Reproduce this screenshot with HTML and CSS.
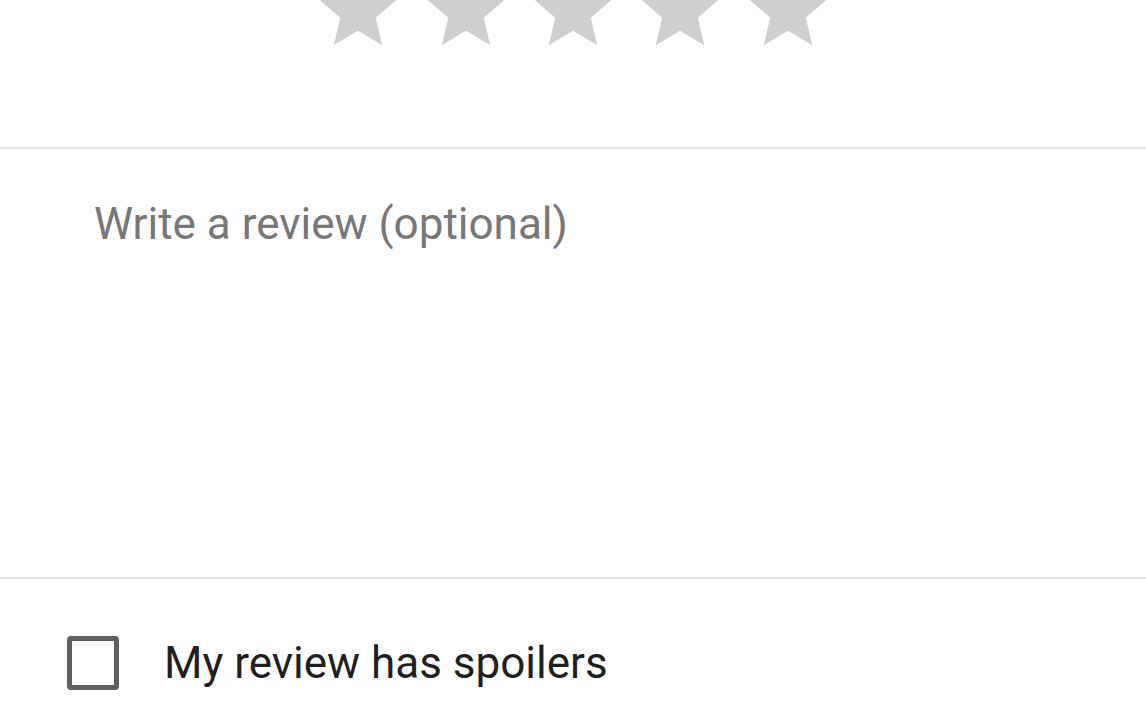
FILE: index.html
```html
<!DOCTYPE html>
<html lang="en">
<head>
<meta charset="utf-8">
<title>Write a review</title>
<link rel="stylesheet" href="styles.css">
</head>
<body>
<div class="page">
  <section class="rating">
    <div class="stars">
      <svg class="star" viewBox="0 0 24 24" aria-hidden="true"><path d="M12 17.27L18.18 21l-1.64-7.03L22 9.24l-7.19-.61L12 2 9.19 8.630 2 9.24l5.46 4.73L5.82 21z"/></svg>
      <svg class="star" viewBox="0 0 24 24" aria-hidden="true"><path d="M12 17.27L18.18 21l-1.64-7.03L22 9.24l-7.19-.61L12 2 9.19 8.63 2 9.24l5.46 4.73L5.82 21z"/></svg>
      <svg class="star" viewBox="0 0 24 24" aria-hidden="true"><path d="M12 17.27L18.18 21l-1.64-7.03L22 9.24l-7.19-.61L12 2 9.19 8.63 2 9.24l5.46 4.73L5.82 21z"/></svg>
      <svg class="star" viewBox="0 0 24 24" aria-hidden="true"><path d="M12 17.27L18.18 21l-1.64-7.03L22 9.24l-7.19-.61L12 2 9.19 8.63 2 9.24l5.46 4.73L5.82 21z"/></svg>
      <svg class="star" viewBox="0 0 24 24" aria-hidden="true"><path d="M12 17.27L18.18 21l-1.64-7.03L22 9.24l-7.19-.61L12 2 9.19 8.63 2 9.24l5.46 4.73L5.82 21z"/></svg>
    </div>
  </section>
  <section class="review">
    <div class="placeholder">Write a review (optional)</div>
  </section>
  <section class="spoilers">
    <span class="checkbox"></span>
    <span class="label">My review has spoilers</span>
  </section>
</div>
</body>
</html>
```

FILE: styles.css
```css
html, body {
  margin: 0;
  padding: 0;
  background: #ffffff;
}

body {
  width: 1146px;
  height: 716px;
  overflow: hidden;
  font-family: Roboto, "Liberation Sans", Arial, sans-serif;
}

.page {
  display: flex;
  flex-direction: column;
}

.rating {
  padding-bottom: 90px;
  border-bottom: 2px solid #e6e6e6;
}

.stars {
  display: flex;
  justify-content: center;
  gap: 13.4px;
  margin-top: -37px;
  height: 94px;
}

.star {
  width: 94px;
  height: 94px;
  flex: 0 0 94px;
  fill: #cfcfcf;
}

.review {
  height: 430px;
  box-sizing: border-box;
  padding: 49px 0 0 94px;
  border-bottom: 2px solid #dedede;
}

.placeholder {
  font-size: 44px;
  line-height: 52px;
  color: #777777;
}

.spoilers {
  display: flex;
  align-items: center;
  gap: 45px;
  padding: 57px 0 0 67px;
}

.checkbox {
  box-sizing: border-box;
  width: 52px;
  height: 54px;
  border: 5px solid #5f5f5f;
  border-radius: 4px;
  flex: 0 0 auto;
}

.label {
  font-size: 44px;
  line-height: 52px;
  color: #1f1f1f;
}
```
